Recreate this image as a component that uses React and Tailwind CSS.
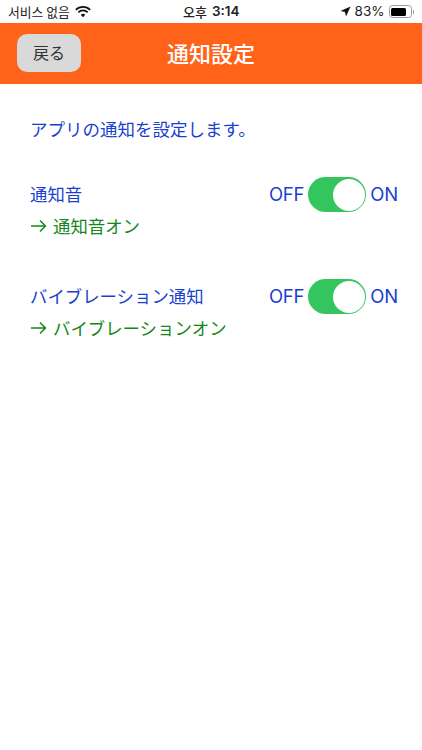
const SANS = "font-['Inter','Noto_Sans_CJK_JP',sans-serif]";
const JP = "font-['Noto_Sans_CJK_JP',sans-serif]";

function WifiIcon() {
  return (
    <svg className="mt-px" width="16" height="12" viewBox="0 0 16 12">
      <path d="M8 11.2 5.7 8.8a3.3 3.3 0 0 1 4.6 0L8 11.2Z" fill="#111" />
      <path d="M3.9 7 2.7 5.7a7.6 7.6 0 0 1 10.6 0L12.1 7a5.8 5.8 0 0 0-8.2 0Z" fill="#111" />
      <path d="M1.4 4.5.2 3.2a11.2 11.2 0 0 1 15.6 0l-1.2 1.3a9.4 9.4 0 0 0-13.2 0Z" fill="#111" />
    </svg>
  );
}

function LocationIcon() {
  return (
    <svg width="11" height="11" viewBox="0 0 12 12">
      <path d="M11.5.5 6.6 11.5 5.4 6.6.5 5.4 11.5.5Z" fill="#111" />
    </svg>
  );
}

function ArrowIcon() {
  return (
    <svg width="17" height="14" viewBox="0 0 17 14" fill="none" stroke="#14871a" strokeWidth="1.5">
      <path d="M1 7h14.5M10 1.5 15.5 7 10 12.5" />
    </svg>
  );
}

function Battery() {
  return (
    <div className="flex items-center">
      <div className="flex h-[13px] w-[23px] items-center rounded-[3.5px] border border-[#9a9a9a] p-[1.5px]">
        <div className="h-full w-[83%] rounded-[1.5px] bg-black" />
      </div>
      <div className="ml-px h-1 w-[1.5px] rounded-r-sm bg-[#9a9a9a]" />
    </div>
  );
}

function StatusBar() {
  return (
    <div className={`relative flex h-[23px] items-center justify-between bg-white pl-2 pr-[8px] text-[13px] text-[#222] ${SANS}`}>
      <div className="flex items-center gap-[5px]">
        <span className="font-['Noto_Sans_CJK_KR',sans-serif] text-[12.8px]">서비스 없음</span>
        <WifiIcon />
      </div>
      <div className="absolute left-[183px] top-0 flex h-[23px] items-center gap-[5px] font-['Noto_Sans_CJK_KR',sans-serif] text-[13px] font-medium">
        <span>오후</span>
        <span className="font-['Inter',sans-serif] text-[13.5px] font-semibold">3:14</span>
      </div>
      <div className="flex items-center gap-[4px]">
        <LocationIcon />
        <span className="text-[13.5px]">83%</span>
        <Battery />
      </div>
    </div>
  );
}

function Toggle() {
  return (
    <div className="flex h-[35px] w-[58px] items-center justify-end rounded-full bg-[#34c55f] pr-[1.5px]">
      <div className="h-8 w-8 rounded-full bg-white" />
    </div>
  );
}

function SettingRow({ label, status }) {
  return (
    <div>
      <div className="flex h-[35px] items-center justify-between">
        <span className="text-[17.4px] text-[#1a3fd0]">{label}</span>
        <div className={`flex items-center text-[18.5px] tracking-[-0.2px] text-[#1a3fd0] ${SANS}`}>
          <span>OFF</span>
          <div className="ml-[4px] mr-[4px]">
            <Toggle />
          </div>
          <span>ON</span>
        </div>
      </div>
      <p className="mt-[2px] flex items-center gap-[6px] text-[17.4px] leading-6 text-[#14871a]">
        <ArrowIcon />
        {status}
      </p>
    </div>
  );
}

export default function App() {
  return (
    <div className={`min-h-[750px] w-[422px] bg-white ${JP}`}>
      <StatusBar />
      <header className="relative flex h-[61px] items-center justify-center bg-[#ff6319] pb-[2px]">
        <button className="absolute left-[17px] top-[11px] flex h-[38px] w-[64px] items-center justify-center rounded-[10px] bg-[#d9d9d9] pb-[3px] text-[16px] text-[#333]">
          戻る
        </button>
        <h1 className="text-[22px] font-medium text-white">通知設定</h1>
      </header>
      <main className="px-[30px] pt-[33px] pr-[24px]">
        <p className="text-[17.5px] leading-6 text-[#1a3fd0]">アプリの通知を設定します。</p>
        <div className="mt-[36px] flex flex-col gap-[41px]">
          <SettingRow label="通知音" status="通知音オン" />
          <SettingRow label="バイブレーション通知" status="バイブレーションオン" />
        </div>
      </main>
    </div>
  );
}
